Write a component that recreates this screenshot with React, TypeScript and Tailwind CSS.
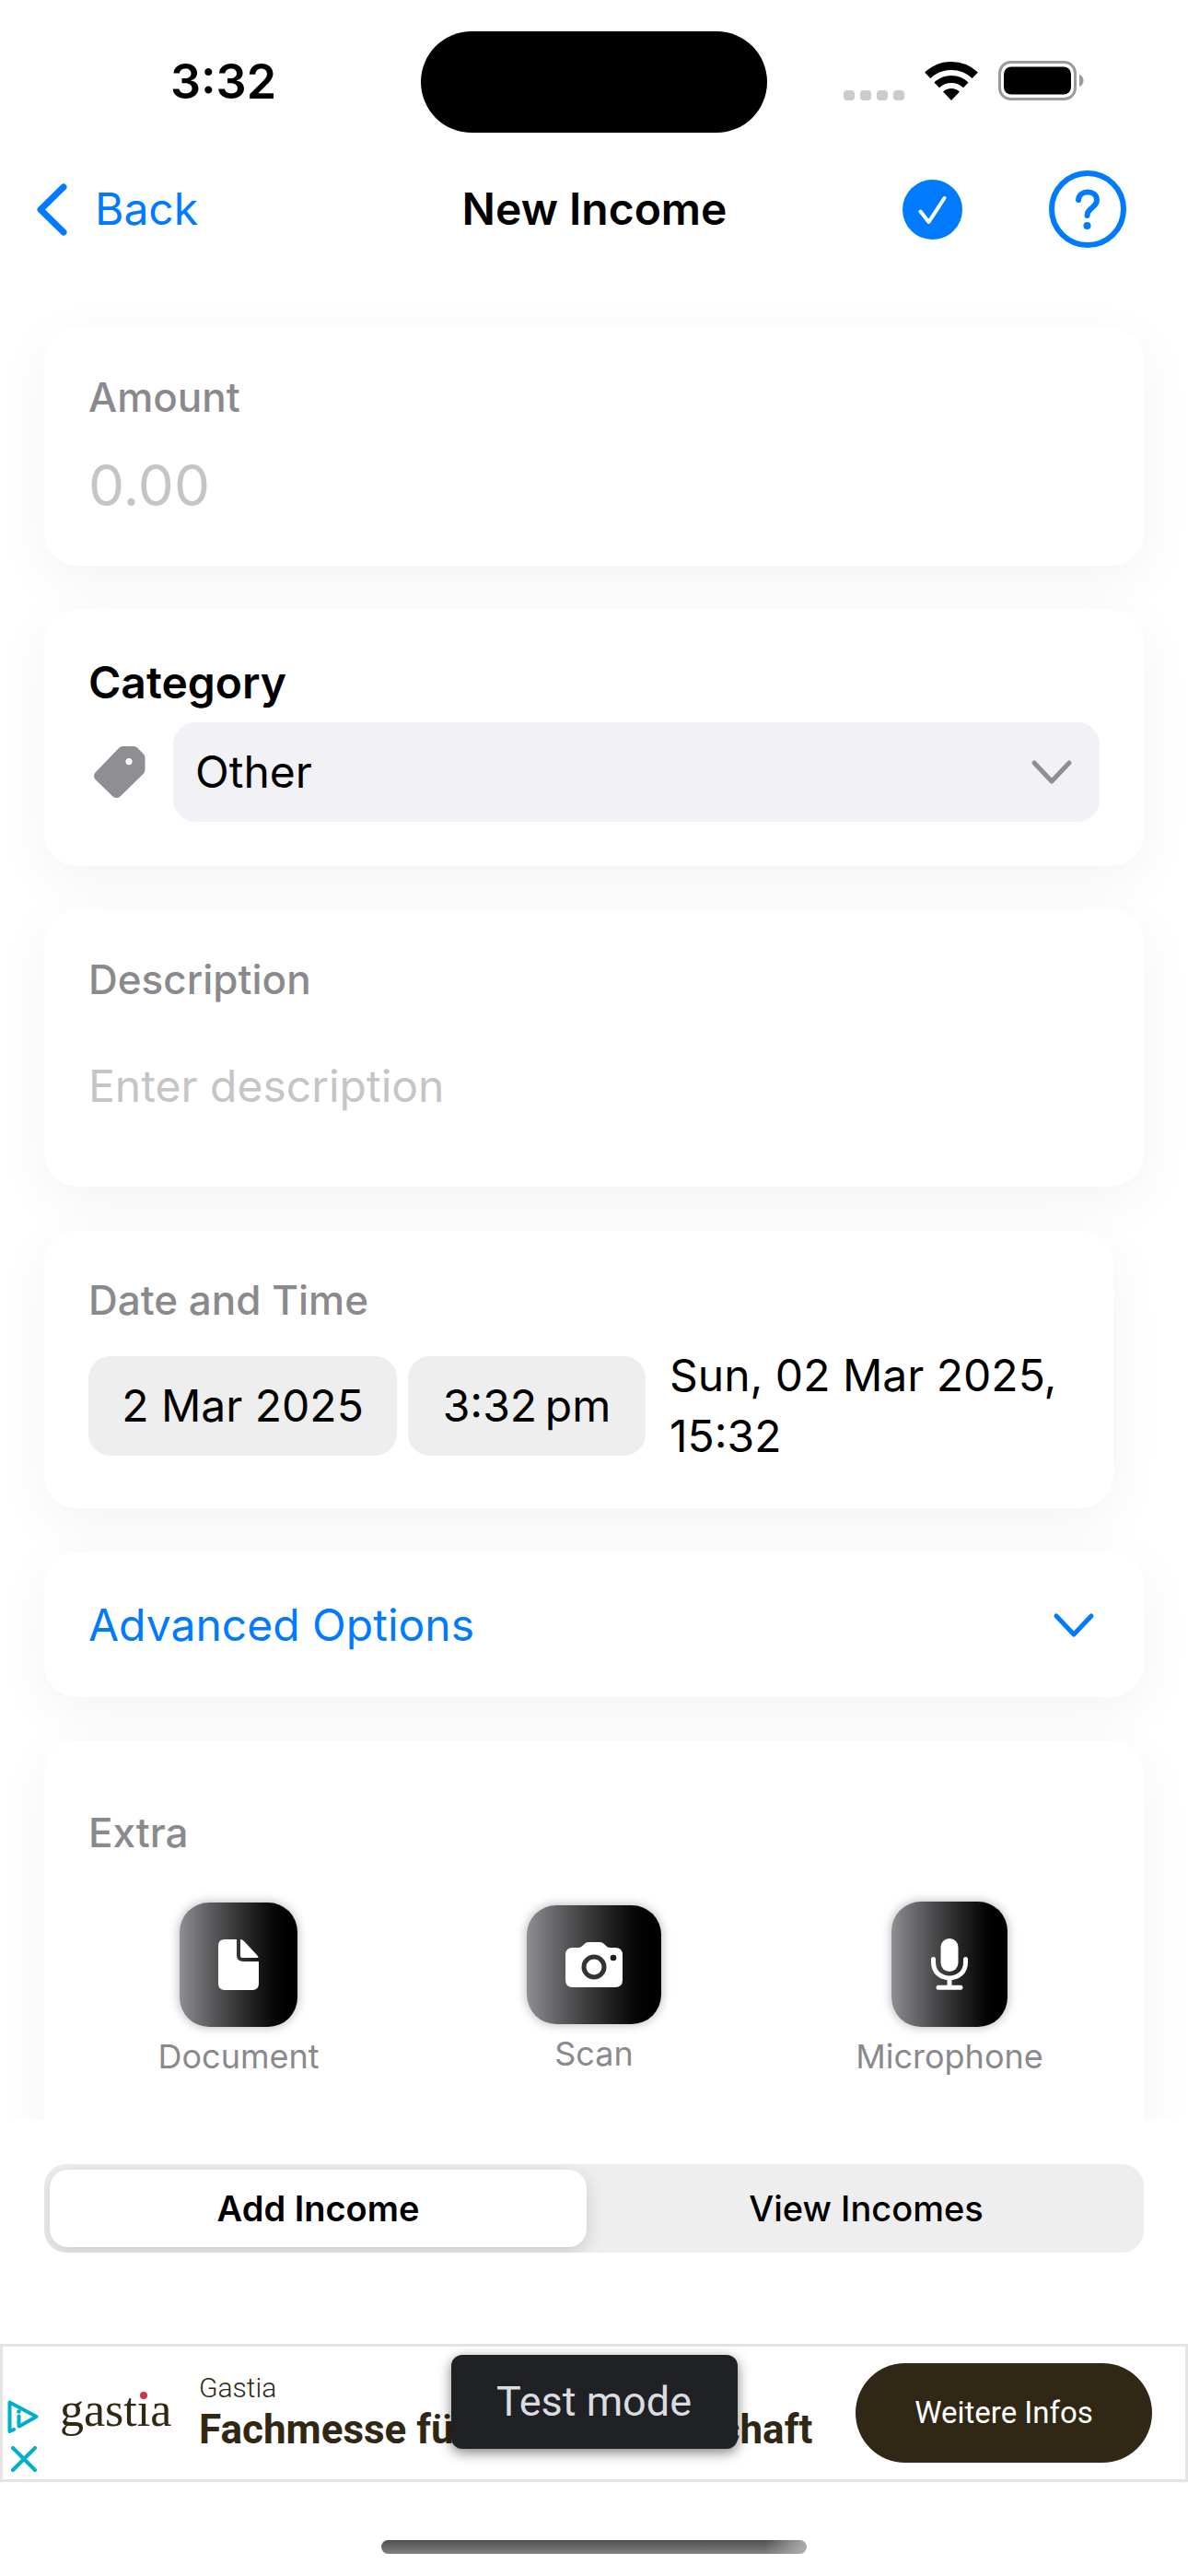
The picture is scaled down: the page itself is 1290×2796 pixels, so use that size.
import { useState, type ReactNode } from "react";
import clsx from "clsx";

type Tab = "add" | "view";

const labelClass = "text-[44px] leading-[54px] font-medium text-[#8a8a8e]";

function Card({ children, className }: { children: ReactNode; className?: string }) {
  return (
    <section
      className={clsx(
        "flex flex-col rounded-[36px] bg-white px-12 shadow-[0_15px_60px_rgba(0,0,0,0.05)]",
        className,
      )}
    >
      {children}
    </section>
  );
}

function ChevronDown({ className }: { className?: string }) {
  return (
    <svg
      viewBox="0 0 54 54"
      className={clsx("size-[54px]", className)}
      fill="none"
      stroke="currentColor"
      strokeWidth="5"
      strokeLinecap="round"
      strokeLinejoin="round"
      aria-hidden="true"
    >
      <path d="M7 17l19 20 19-20" />
    </svg>
  );
}

function StatusBar() {
  return (
    <div className="grid h-[162px] shrink-0 grid-cols-[1fr_376px_1fr] pt-[34px] pb-[18px]">
      <div className="flex items-center justify-center pl-7 text-[52px] leading-[62px] font-semibold">
        3:32
      </div>
      <div className="rounded-full bg-black" />
      <div className="flex items-center justify-center pr-[30px] pb-1">
        <div className="flex items-end gap-[22px]">
          <svg viewBox="0 0 66 11" className="h-[11px] w-[66px]" fill="#cbcbcb" aria-hidden="true">
            <rect width="12" height="11" rx="4" />
            <rect x="18" width="12" height="11" rx="4" />
            <rect x="36" width="12" height="11" rx="4" />
            <rect x="54" width="12" height="11" rx="4" />
          </svg>
          <svg viewBox="0 0 58 42" className="h-[42px] w-[58px]" fill="none" stroke="#000" aria-hidden="true">
            <path d="M3.2 14.8A37.5 37.5 0 0 1 54.8 14.8" strokeWidth="9" />
            <path d="M13.2 25.3A23 23 0 0 1 44.8 25.3" strokeWidth="8" />
            <path d="M29 42L20 32.6A13 13 0 0 1 38 32.6Z" fill="#000" stroke="none" />
          </svg>
          <svg viewBox="0 0 93 43" className="h-[43px] w-[93px]" aria-hidden="true">
            <rect x="1.5" y="1.5" width="82" height="40" rx="12" fill="none" stroke="#9b9b9b" strokeWidth="3" />
            <rect x="6" y="6.5" width="73" height="30" rx="8" fill="#000" />
            <path d="M88 15c6 2 6 11 0 13z" fill="#9b9b9b" />
          </svg>
        </div>
      </div>
    </div>
  );
}

function NavBar() {
  return (
    <header className="grid h-[130px] shrink-0 grid-cols-[1fr_auto_1fr] items-center pr-[67px] pl-10 text-[48px] leading-[60px]">
      <button type="button" className="flex items-center gap-[30px] text-[#007aff]">
        <svg
          viewBox="0 0 33 57"
          className="h-[57px] w-[33px]"
          fill="none"
          stroke="currentColor"
          strokeWidth="7"
          strokeLinecap="round"
          strokeLinejoin="round"
          aria-hidden="true"
        >
          <path d="M29 4L4 28.500L29 53" />
        </svg>
        Back
      </button>
      <h1 className="pl-7 font-semibold">New Income</h1>
      <div className="flex items-center justify-end gap-[94px] text-[#007aff]">
        <button type="button" aria-label="Save">
          <svg viewBox="0 0 65 65" className="size-[65px]" aria-hidden="true">
            <circle cx="32.5" cy="32.5" r="32.5" fill="currentColor" />
            <path
              d="M19.500 34.500L28.500 46L45.500 20"
              fill="none"
              stroke="#fff"
              strokeWidth="4"
              strokeLinecap="round"
              strokeLinejoin="round"
            />
          </svg>
        </button>
        <button type="button" aria-label="Help">
          <svg viewBox="0 0 84 84" className="size-[84px]" fill="none" stroke="currentColor" aria-hidden="true">
            <circle cx="42" cy="42" r="39" strokeWidth="6" />
            <path
              d="M32 32C32.500 20.500 52 20.500 52 32C52 40.500 41.500 40.500 41.500 49"
              strokeWidth="6"
              strokeLinecap="round"
            />
            <circle cx="41.500" cy="60" r="4" fill="currentColor" stroke="none" />
          </svg>
        </button>
      </div>
    </header>
  );
}

function ExtraAction({ label, tile, children }: { label: string; tile: string; children: ReactNode }) {
  return (
    <button type="button" className="flex flex-col items-center gap-2.5">
      <span
        className={clsx(
          "flex items-center justify-center rounded-[32px] bg-linear-to-r from-[#8e8e93] via-[#343435] to-black text-white shadow-[0_0_12px_rgba(0,0,0,0.3)]",
          tile,
        )}
      >
        {children}
      </span>
      <span className="text-[36px] leading-[44px] text-[#8a8a8e]">{label}</span>
    </button>
  );
}

function AdBanner() {
  return (
    <aside className="relative flex h-[150px] items-center border-[3px] border-[#e4e4e4] bg-white pr-9 pl-[5px] font-[Roboto,sans-serif] text-[#302814]">
      <div className="flex flex-col gap-[14px] pt-[50px] text-[#00aecd]">
        <a href="#adchoices" aria-label="AdChoices">
          <svg viewBox="0 0 34 36" className="h-9 w-[34px]" fill="none" stroke="currentColor" aria-hidden="true">
            <path d="M7 32L2.500 34V2.500L31.500 18L13 28.500" strokeWidth="4" strokeLinejoin="round" strokeLinecap="round" />
            <path d="M12.500 17.500V28" strokeWidth="4" strokeLinecap="round" />
            <circle cx="12.500" cy="12.500" r="2.300" fill="currentColor" stroke="none" />
          </svg>
        </a>
        <button type="button" aria-label="Close ad" className="pl-1">
          <svg viewBox="0 0 28 28" className="size-7" stroke="currentColor" strokeWidth="4" strokeLinecap="round" aria-hidden="true">
            <path d="M2 2l24 24M26 2L2 26" />
          </svg>
        </button>
      </div>
      <svg viewBox="0 0 124 72" className="ml-[22px] h-[72px] w-[124px]" role="img" aria-label="gastia">
        <text x="1" y="50" fontSize="52" fill="#302814" fontFamily="Liberation Serif, serif">
          gastia
        </text>
        <circle cx="92" cy="17" r="4" fill="#c8384a" />
      </svg>
      <div className="ml-7 flex-1 whitespace-nowrap">
        <p className="text-[30px] leading-9 font-light">Gastia</p>
        <p className="text-[44px] leading-[54px] font-bold">Fachmesse für die Gastwirtschaft</p>
      </div>
      <button type="button" className="h-[108px] w-[322px] rounded-full bg-[#302814] text-[33px] leading-10 text-white">
        Weitere Infos
      </button>
      <div className="absolute inset-x-0 top-[9px] flex justify-center">
        <p className="flex h-[102px] w-[311px] items-center justify-center rounded-xl bg-[#202124] text-[45px] leading-[54px] text-[#dadce0] shadow-[0_4px_14px_rgba(0,0,0,0.5)]">
          Test mode
        </p>
      </div>
    </aside>
  );
}

export default function App() {
  const [amount, setAmount] = useState("");
  const [category, setCategory] = useState("Other");
  const [description, setDescription] = useState("");
  const [tab, setTab] = useState<Tab>("add");

  return (
    <div className="flex h-screen flex-col overflow-hidden bg-white font-[Inter,sans-serif] text-black">
      <StatusBar />
      <NavBar />

      <main className="flex min-h-0 flex-1 flex-col gap-12 overflow-y-auto px-12 pt-16 [scrollbar-width:none] *:shrink-0">
        <Card className="gap-7 py-12">
          <label htmlFor="amount" className={labelClass}>
            Amount
          </label>
          <input
            id="amount"
            inputMode="decimal"
            value={amount}
            onChange={(e) => setAmount(e.target.value)}
            placeholder="0.00"
            className="h-20 w-full text-[62px] outline-none placeholder:text-[#c5c5c7]"
          />
        </Card>

        <Card className="gap-3 py-12">
          <label htmlFor="category" className="text-[48px] leading-[62px] font-semibold">
            Category
          </label>
          <div className="flex items-center gap-6">
            <div className="flex w-[68px] justify-center text-[#8e8e93]">
              <svg viewBox="0 0 56 56" className="size-14" fill="currentColor" aria-hidden="true">
                <path
                  fillRule="evenodd"
                  d="M31 0H43Q45.500 0 47.500 2L53.500 8Q55.500 10 55.500 12.500V25Q55.500 28 53.500 30L28.500 54.500Q24.500 57.500 20.500 54.500L1.500 36Q-1.500 32.500 1.500 28.500L26.500 2.500Q28.500 0 31 0ZM38 13A3.600 3.600 0 1 0 38 20.200A3.600 3.600 0 1 0 38 13Z"
                />
              </svg>
            </div>
            <div className="relative flex-1">
              <select
                id="category"
                value={category}
                onChange={(e) => setCategory(e.target.value)}
                className="h-[108px] w-full appearance-none rounded-3xl bg-[#f2f1f6] px-6 text-[48px] outline-none"
              >
                <option>Other</option>
                <option>Salary</option>
                <option>Gift</option>
              </select>
              <ChevronDown className="pointer-events-none absolute top-[27px] right-6 text-[#8e8e93]" />
            </div>
          </div>
        </Card>

        <Card className="gap-[26px] py-12">
          <label htmlFor="description" className={labelClass}>
            Description
          </label>
          <input
            id="description"
            value={description}
            onChange={(e) => setDescription(e.target.value)}
            placeholder="Enter description"
            className="h-[124px] w-full text-[48px] outline-none placeholder:text-[#c5c5c7]"
          />
        </Card>

        <Card className="mr-[33px] gap-[22px] pt-12 pb-[45px]">
          <h2 className={labelClass}>Date and Time</h2>
          <div className="flex items-center text-[48px]">
            <button type="button" className="h-[108px] w-[335px] shrink-0 rounded-3xl bg-[#eeeeee]">
              2 Mar 2025
            </button>
            <button type="button" className="ml-3 h-[108px] w-[258px] shrink-0 rounded-3xl bg-[#eeeeee]">
              3:32{"\u202f"}pm
            </button>
            <p className="ml-[26px] leading-[66px]">Sun, 02 Mar 2025, 15:32</p>
          </div>
        </Card>

        <Card className="py-12">
          <button type="button" className="flex items-center justify-between text-[48px] leading-[61px] text-[#007aff]">
            Advanced Options
            <ChevronDown />
          </button>
        </Card>

        <Card className="gap-12 pt-[72px] pb-24">
          <h2 className={labelClass}>Extra</h2>
          <div className="grid grid-cols-3 items-center gap-[60px]">
            <ExtraAction label="Document" tile="h-[135px] w-32">
              <svg viewBox="0 0 44 55" className="h-[55px] w-11" fill="currentColor" aria-hidden="true">
                <path d="M7 0H20V17Q20 24 27 24H44V48Q44 55 37 55H7Q0 55 0 48V7Q0 0 7 0Z" />
                <path d="M24 0Q26 0 28 2L42 17Q43.500 18.500 43.500 20H26Q24 20 24 18Z" />
              </svg>
            </ExtraAction>
            <ExtraAction label="Scan" tile="h-[129px] w-[146px]">
              <svg viewBox="0 0 62 49" className="h-[49px] w-[62px]" aria-hidden="true">
                <path
                  d="M8 6H14Q16.500 6 18.500 4L20.500 2Q22.500 0 25 0H37.500Q40 0 42 2L44 4Q46 6 48 6H54Q62 6 62 14V41Q62 49 54 49H8Q0 49 0 41V14Q0 6 8 6Z"
                  fill="currentColor"
                />
                <circle cx="31" cy="27" r="11" fill="none" stroke="#333335" strokeWidth="5" />
                <circle cx="52" cy="17" r="3.300" fill="#1c1c1c" />
              </svg>
            </ExtraAction>
            <ExtraAction label="Microphone" tile="h-[136px] w-[126px]">
              <svg viewBox="0 0 40 56" className="h-14 w-10" aria-hidden="true">
                <rect x="10.500" width="19" height="36" rx="9.500" fill="currentColor" />
                <path
                  d="M2.500 22.500V26C2.500 48.500 37.500 48.500 37.500 26V22.500M20 44V53M8 53.300H32"
                  fill="none"
                  stroke="currentColor"
                  strokeWidth="5"
                  strokeLinecap="round"
                />
              </svg>
            </ExtraAction>
          </div>
        </Card>
      </main>

      <footer className="relative flex shrink-0 flex-col bg-white">
        <div className="mx-12 mt-12 grid h-24 grid-cols-2 overflow-hidden rounded-3xl bg-[#eeeeee] p-[6px] text-[38px] leading-[48px]">
          <button
            type="button"
            aria-pressed={tab === "add"}
            onClick={() => setTab("add")}
            className={clsx(
              "mr-2 rounded-[20px]",
              tab === "add" ? "bg-white font-semibold shadow-[0_6px_20px_rgba(0,0,0,0.15)]" : "font-medium",
            )}
          >
            Add Income
          </button>
          <button
            type="button"
            aria-pressed={tab === "view"}
            onClick={() => setTab("view")}
            className={clsx(
              "rounded-[20px]",
              tab === "view" ? "bg-white font-semibold shadow-[0_6px_20px_rgba(0,0,0,0.15)]" : "font-medium",
            )}
          >
            View Incomes
          </button>
        </div>
        <div className="mt-[99px]">
          <AdBanner />
        </div>
        <div className="mx-auto mt-[63px] mb-6 h-[15px] w-[462px] rounded-full bg-[linear-gradient(100deg,transparent_90%,#b0b0b0),linear-gradient(#505050,#808080)]" />
      </footer>
    </div>
  );
}
